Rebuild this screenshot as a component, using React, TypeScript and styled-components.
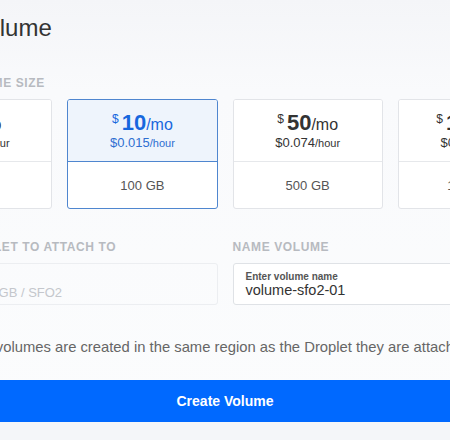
import styled, { createGlobalStyle } from 'styled-components';

const GlobalStyle = createGlobalStyle`
  html, body {
    margin: 0;
    padding: 0;
    overflow: hidden;
    background: #f4f6f9;
  }
  body {
    font-family: 'Liberation Sans', Arial, sans-serif;
    color: #333;
  }
`;

const sizes = [
  { gb: 50, month: 5, hour: '0.007' },
  { gb: 100, month: 10, hour: '0.015' },
  { gb: 500, month: 50, hour: '0.074' },
  { gb: 1000, month: 100, hour: '0.149' },
];

const Page = styled.div`
  width: 450px;
  height: 440px;
  overflow: hidden;
  background: #f4f6f9;
`;

const Modal = styled.section`
  background: linear-gradient(#f4f5f8 0px, #f9fafc 90px, #fbfcfd 100%);
`;

const Content = styled.div`
  width: 646px;
  margin-left: -98px;
  padding-top: 15px;
`;

const Title = styled.h1`
  margin: 0 0 0 -9px;
  font-size: 24px;
  line-height: 26px;
  font-weight: 400;
  color: #333;
`;

const SectionLabel = styled.h2<{ $top: number }>`
  margin: ${(p) => p.$top}px 0 9px;
  font-size: 12px;
  line-height: 14px;
  font-weight: 700;
  letter-spacing: 0.6px;
  text-transform: uppercase;
  color: #b7bac0;
`;

const CardGrid = styled.div`
  display: grid;
  grid-template-columns: repeat(4, 1fr);
  gap: 15px;
`;

const Card = styled.div<{ $active?: boolean }>`
  height: 110px;
  box-sizing: border-box;
  display: flex;
  flex-direction: column;
  border: 1px solid ${(p) => (p.$active ? '#4f86cf' : '#e2e4e8')};
  border-radius: 3px;
  background: #fff;
  overflow: hidden;
`;

const CardTop = styled.div<{ $active?: boolean }>`
  height: 62px;
  box-sizing: border-box;
  padding-top: 12px;
  text-align: center;
  background: ${(p) => (p.$active ? '#eef4fc' : '#fff')};
  border-bottom: 1px solid ${(p) => (p.$active ? '#4f86cf' : '#e6e8eb')};
  color: ${(p) => (p.$active ? '#1767de' : '#333')};
`;

const Price = styled.div`
  font-size: 16px;
  line-height: 22px;
  white-space: nowrap;
`;

const Dollar = styled.span`
  font-size: 12px;
  line-height: 12px;
  vertical-align: 7px;
  margin-right: 3px;
`;

const Amount = styled.span`
  font-size: 22px;
  font-weight: 700;
`;

const Hourly = styled.div<{ $active?: boolean }>`
  font-size: 13px;
  line-height: 14px;
  color: ${(p) => (p.$active ? '#2f6fd1' : '#333')};

  small {
    font-size: 11px;
  }
`;

const CardBottom = styled.div`
  flex: 1;
  display: flex;
  align-items: center;
  justify-content: center;
  font-size: 13px;
  color: #555;
`;

const FormRow = styled.div`
  display: grid;
  grid-template-columns: 1fr 1fr;
  gap: 15px;
`;

const Field = styled.div`
  height: 42px;
  box-sizing: border-box;
  padding: 7px 12px 0;
  border: 1px solid #dfe2e6;
  border-radius: 3px;
  background: #fff;
`;

const SelectField = styled(Field)`
  padding: 10px 12px 0 37px;
  border-color: #eceef1;
  background: transparent;
`;

const FieldLabel = styled.div<{ $muted?: boolean }>`
  font-size: 10px;
  line-height: 11px;
  font-weight: 700;
  color: ${(p) => (p.$muted ? '#d3d6da' : '#555')};
`;

const FieldValue = styled.div`
  font-size: 14.5px;
  line-height: 16px;
  white-space: nowrap;
  color: #333;
`;

const SelectValue = styled(FieldValue)`
  font-size: 13px;
  color: #c4c7cc;
`;

const Note = styled.p`
  margin: 32px 0 0;
  font-size: 14.8px;
  line-height: 20px;
  color: #666;
  white-space: nowrap;
`;

const CreateButton = styled.button`
  display: block;
  width: 100%;
  height: 42px;
  margin-top: 23px;
  border: none;
  border-radius: 0;
  background: #0069ff;
  color: #fff;
  font-family: 'Liberation Sans', Arial, sans-serif;
  font-size: 14px;
  font-weight: 700;
  cursor: pointer;
`;

export default function App() {
  return (
    <Page>
      <GlobalStyle />
      <Modal>
        <Content>
          <Title>Create Volume</Title>

          <SectionLabel $top={35}>Select volume size</SectionLabel>
          <CardGrid>
            {sizes.map((s) => {
              const active = s.gb === 100;
              return (
                <Card key={s.gb} $active={active}>
                  <CardTop $active={active}>
                    <Price>
                      <Dollar>$</Dollar>
                      <Amount>{s.month}</Amount>/mo
                    </Price>
                    <Hourly $active={active}>
                      ${s.hour}
                      <small>/hour</small>
                    </Hourly>
                  </CardTop>
                  <CardBottom>{s.gb} GB</CardBottom>
                </Card>
              );
            })}
          </CardGrid>

          <FormRow>
            <div>
              <SectionLabel $top={31}>Select Droplet to attach to</SectionLabel>
              <SelectField>
                <FieldLabel $muted>&nbsp;</FieldLabel>
                <SelectValue>1 GB / 25 GB / SFO2</SelectValue>
              </SelectField>
            </div>
            <div>
              <SectionLabel $top={31}>Name volume</SectionLabel>
              <Field>
                <FieldLabel>Enter volume name</FieldLabel>
                <FieldValue>volume-sfo2-01</FieldValue>
              </Field>
            </div>
          </FormRow>

          <Note>
            Block storage volumes are created in the same region as the Droplet
            they are attached to.
          </Note>

          <CreateButton type="button">Create Volume</CreateButton>
        </Content>
      </Modal>
    </Page>
  );
}
